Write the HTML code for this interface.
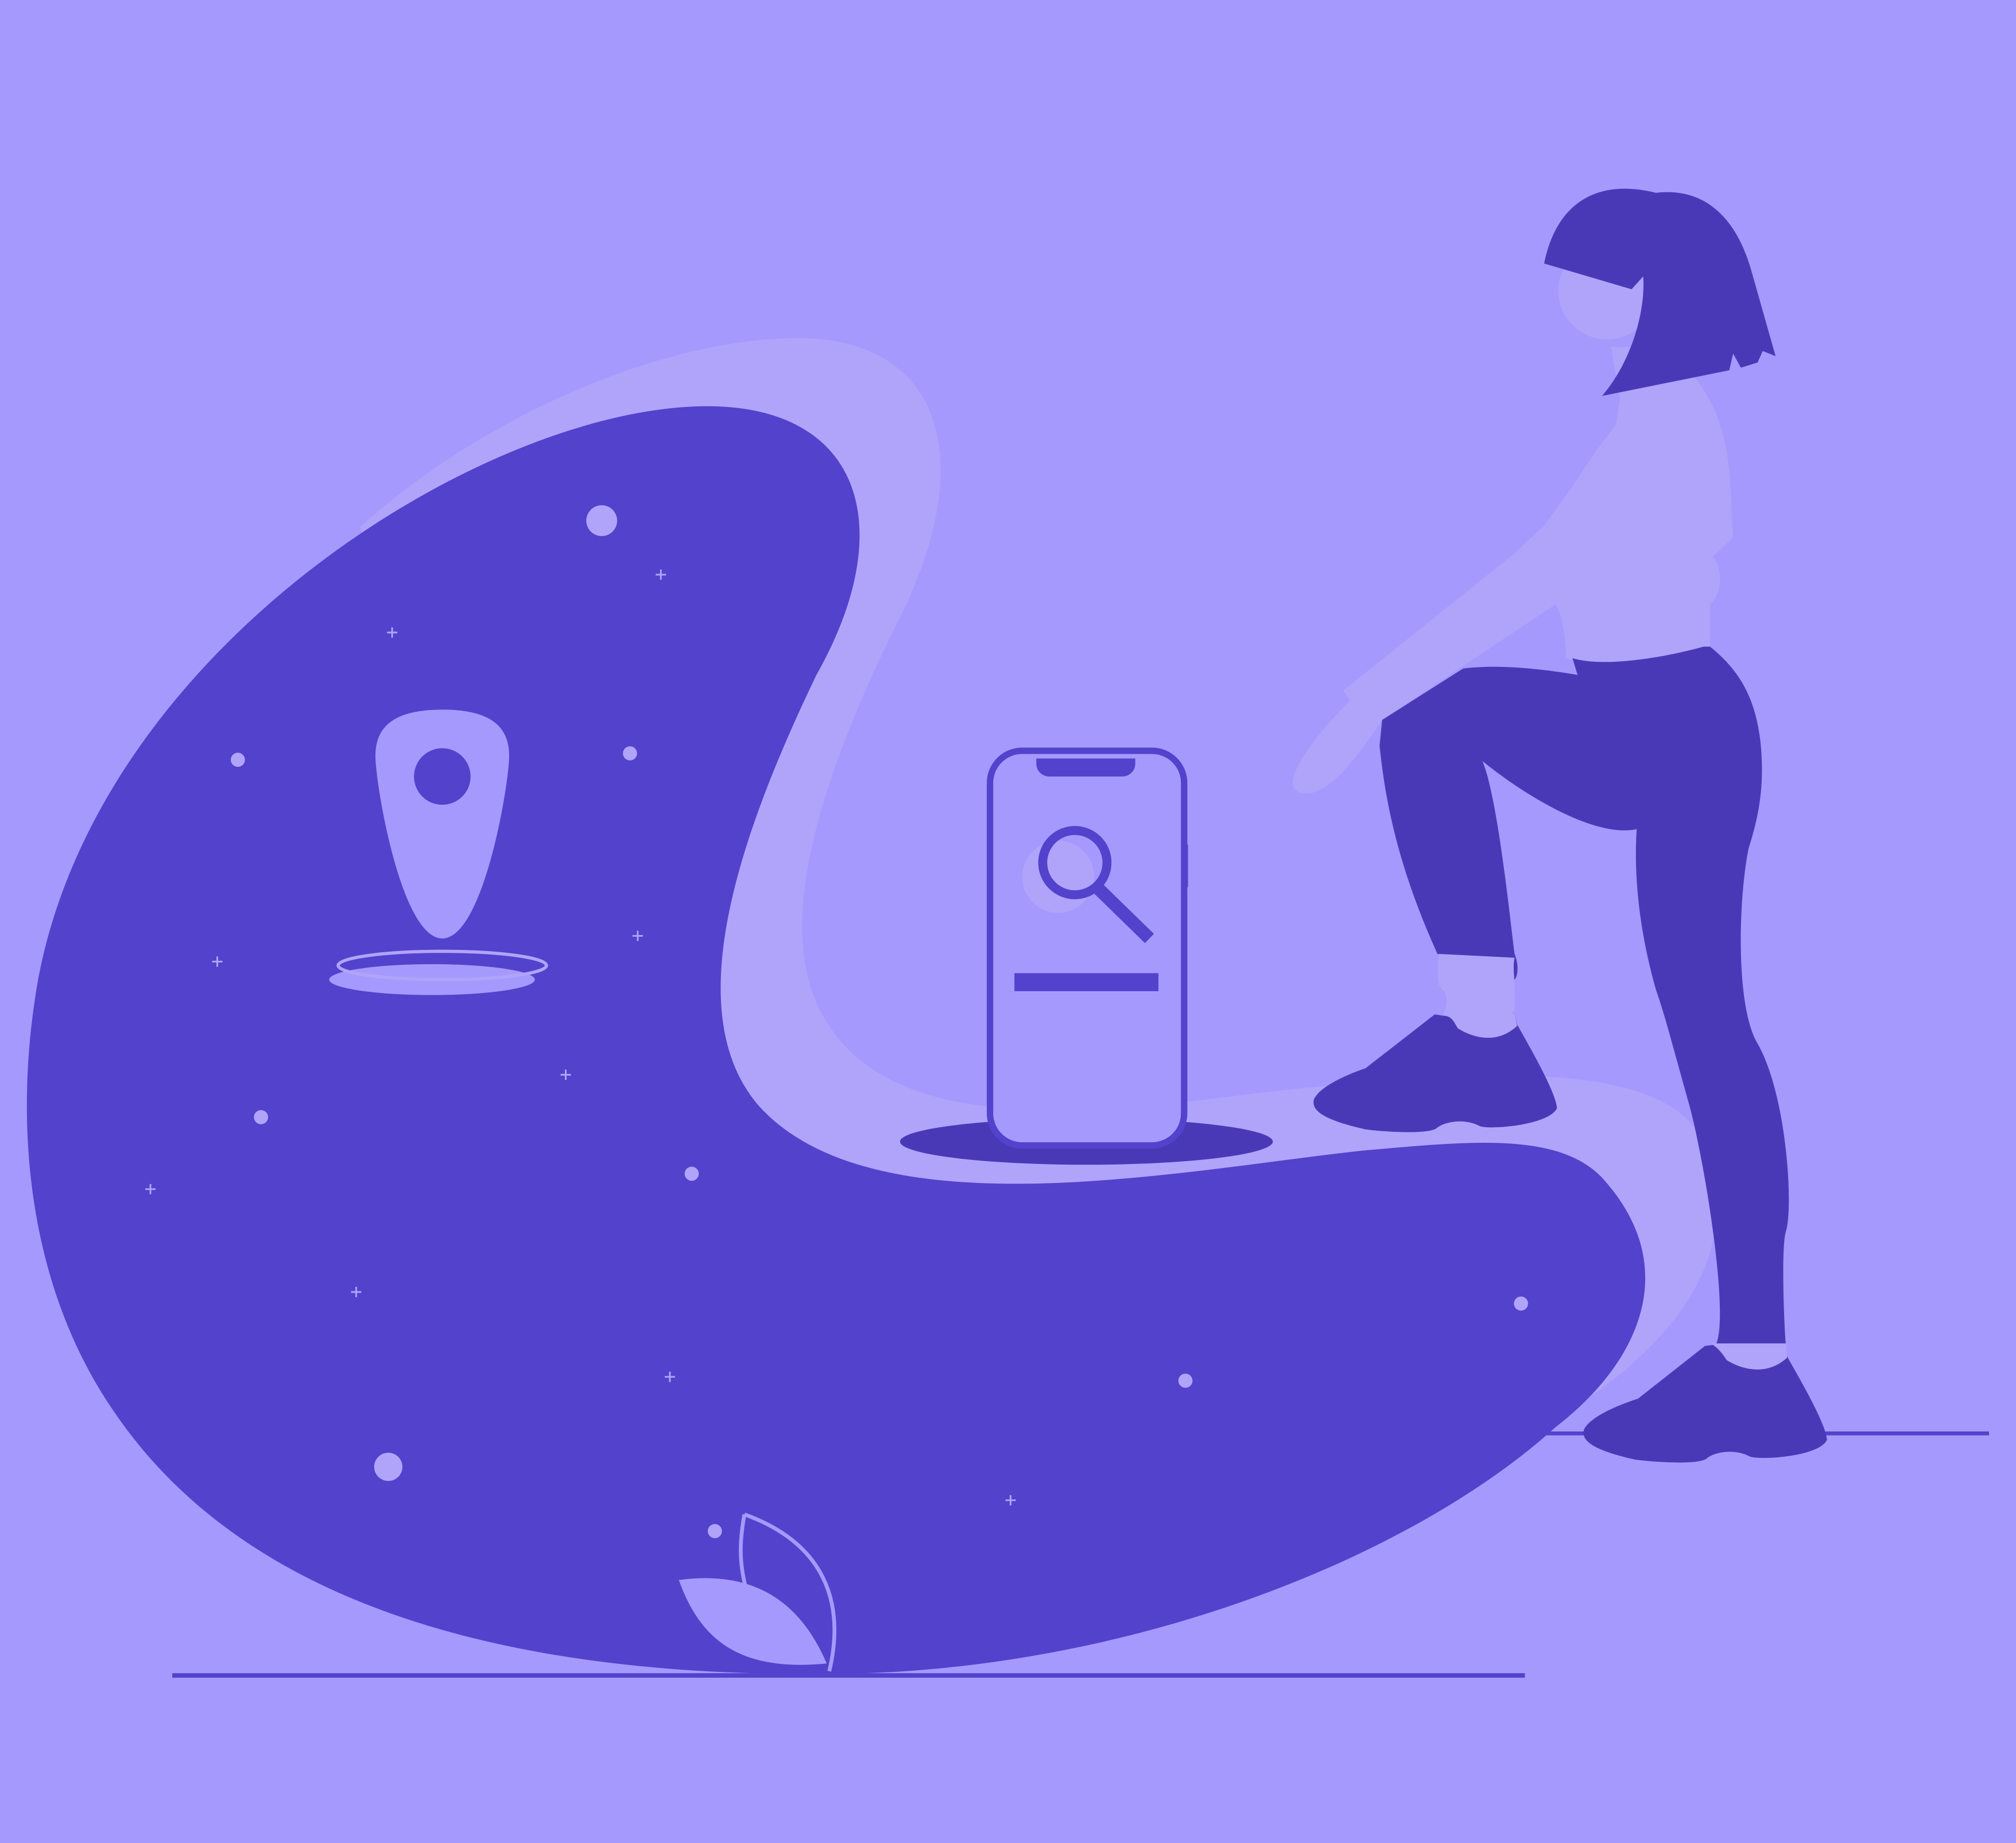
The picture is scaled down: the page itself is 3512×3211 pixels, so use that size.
<!DOCTYPE html>
<html><head><meta charset="utf-8"><style>html,body{margin:0;padding:0;background:#a599fe;overflow:hidden}svg{display:block}</style></head>
<body>
<svg width="3512" height="3211" viewBox="0 0 1568 1433.6" xmlns="http://www.w3.org/2000/svg">
<rect width="1568" height="1434" fill="#a599fe"/>
<!-- light back blob -->
<path d="M280,410 C380,320 520,263 620,263 C735,263 760,360 700,480 C640,600 600,720 640,790 C690,880 830,870 980,850 C1120,835 1280,820 1320,880 C1360,960 1320,1040 1200,1110 L560,1110 Z" fill="#b0a4fa"/>
<!-- dark blob -->
<path d="M550,316 C670,316 700,410 635,525 C570,660 530,790 590,860 C680,960 920,910 1060,895 C1140,888 1210,880 1245,915 C1310,985 1275,1060 1210,1110 C1100,1210 880,1300 650,1302 C420,1305 200,1260 90,1100 C20,1000 10,870 30,760 C80,500 380,316 550,316 Z" fill="#5342cc"/>
<!-- ground lines -->
<rect x="134" y="1301.5" width="1052" height="3.5" fill="#5342cc"/>
<rect x="1195" y="1113.5" width="352" height="3" fill="#5342cc"/>
<!-- dots -->
<g fill="#b0a4fa">
<circle cx="468" cy="405" r="12"/><circle cx="185" cy="591" r="5.5"/><circle cx="490" cy="586" r="5.5"/>
<circle cx="203" cy="869" r="5.5"/><circle cx="538" cy="913" r="5.5"/><circle cx="302" cy="1141" r="11"/>
<circle cx="922" cy="1074" r="5.5"/><circle cx="1183" cy="1014" r="5.5"/><circle cx="556" cy="1191" r="5.5"/>
</g>
<g stroke="#b0a4fa" stroke-width="1.3">
<path d="M514,443v8M510,447h8M305,488v8M301,492h8M496,724v8M492,728h8M169,744v8M165,748h8M440,832v8M436,836h8M117,921v8M113,925h8M277,1001v8M273,1005h8M521,1067v8M517,1071h8M786,1163v8M782,1167h8"/>
</g>
<!-- pin -->
<path d="M344,552 C380,552 396,564 396,588 C396,610 376,730 344,730 C312,730 292,610 292,588 C292,564 308,552 344,552 Z" fill="#a599fe"/>
<circle cx="344" cy="604" r="22" fill="#5342cc"/>
<ellipse cx="336" cy="762" rx="80" ry="12" fill="#a599fe"/>
<ellipse cx="344" cy="751" rx="81" ry="11" fill="none" stroke="#b0a4fa" stroke-width="2.5"/>
<!-- leaves -->
<path d="M528,1229 C580,1222 620,1240 643,1294 C580,1300 546,1280 528,1229 Z" fill="#a599fe"/>
<path d="M579,1178 C640,1200 658,1245 645,1300" fill="none" stroke="#a599fe" stroke-width="3"/>
<path d="M579,1178 C575,1200 575,1215 580,1235" fill="none" stroke="#a599fe" stroke-width="3"/>
<!-- phone -->
<ellipse cx="845" cy="888" rx="145" ry="18" fill="#4a39b7"/>
<rect x="921" y="657" width="3" height="33" fill="#5342cc"/>
<rect x="770" y="584" width="151" height="307" rx="25" fill="#a599fe" stroke="#5342cc" stroke-width="5"/>
<path d="M806,590 h77 v4 a10,10 0 0 1 -10,10 h-57 a10,10 0 0 1 -10,-10 Z" fill="#5342cc"/>
<circle cx="823" cy="682" r="28" fill="#b0a4fa"/>
<circle cx="836" cy="671" r="25" fill="none" stroke="#5342cc" stroke-width="7"/>
<path d="M853,690 L894,730" stroke="#5342cc" stroke-width="10"/>
<rect x="789" y="757" width="112" height="14" fill="#5342cc"/>
<!-- person -->
<g fill="#b0a4fa">
<circle cx="1250" cy="226" r="38"/>
<path d="M1253,270 L1260,310 L1257,330 L1242,350 L1222,380 L1200,410 L1176,432 L1045,537 L1050,545 C1020,575 995,610 1010,616 C1030,624 1055,590 1075,560 L1210,470 C1216,480 1218,500 1218,512 C1240,520 1290,512 1330,503 L1330,470 C1340,462 1340,440 1332,433 L1348,418 C1345,380 1350,330 1315,290 L1300,270 Z"/>
</g>
<g fill="#4a39b7">
<path d="M1201,205 C1210,160 1240,138 1288,150 C1330,145 1352,175 1362,210 L1381,277 L1371,273 L1367,282 L1354,286 L1348,275 L1345,288 L1246,308 C1270,280 1280,240 1278,215 L1269,225 Z"/>
<path d="M1138,520 C1170,516 1210,522 1227,525 L1223,512 C1250,520 1300,510 1325,503 L1330,503 C1355,523 1365,545 1369,575 C1373,610 1368,635 1360,660 C1352,700 1350,780 1366,810 C1390,850 1395,940 1389,958 C1385,970 1388,1040 1389,1045 L1335,1045 C1345,1020 1325,900 1314,860 C1300,810 1295,790 1288,770 C1278,735 1270,690 1273,645 C1240,652 1185,618 1153,592 C1165,620 1175,720 1178,742 C1182,752 1180,760 1178,762 L1118,742 C1090,680 1078,630 1073,580 L1075,560 Z"/>
<path d="M1122,790 C1130,788 1150,790 1178,788 L1180,797 C1193,820 1210,850 1211,862 C1205,875 1160,879 1151,876 C1140,870 1125,872 1118,877 C1112,884 1060,879 1060,878 C1025,870 1020,862 1022,855 C1028,842 1062,831 1062,831 L1116,789 Z"/>
<path d="M1340,1045 C1350,1048 1375,1050 1389,1053 L1391,1057 C1403,1078 1420,1108 1421,1120 C1415,1133 1370,1136 1361,1133 C1350,1127 1335,1129 1328,1134 C1322,1141 1272,1136 1270,1135 C1235,1127 1230,1119 1232,1112 C1238,1099 1274,1088 1274,1088 L1326,1047 Z"/>
</g>
<g fill="#b0a4fa">
<path d="M1119,742 L1178,745 C1176,755 1179,760 1178,786 C1170,795 1125,790 1122,790 C1127,780 1126,772 1120,768 C1117,760 1119,742 1119,742 Z"/>
<path d="M1335,1045 L1389,1045 L1390,1056 C1375,1070 1356,1066 1343,1058 C1338,1050 1333,1046 1330,1045 Z"/>
<path d="M1122,790 C1130,790 1131,796 1134,800 C1147,808 1165,812 1180,798 L1178,788 Z"/>
</g>
</svg>
</body></html>
